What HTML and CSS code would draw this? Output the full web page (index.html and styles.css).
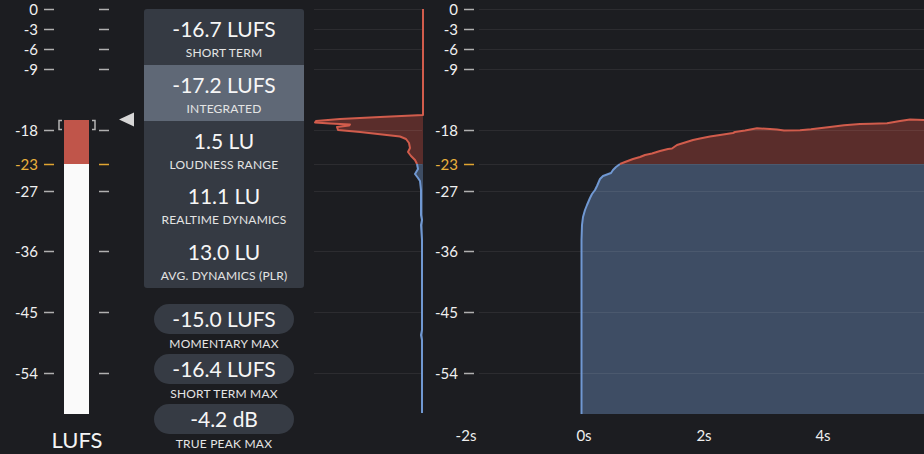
FILE: index.html
```html
<!DOCTYPE html>
<html lang="en">
<head>
    <meta charset="UTF-8">
    <title>Loudness Meter</title>
    <link rel="stylesheet" href="styles.css">
</head>
<body>
    <div class="app">
        <!-- LUFS bar meter -->
        <div class="meter">
            <svg class="meter-svg" width="140" height="454" viewBox="0 0 140 454">
                <g class="scale-text">
                    <text x="38" y="15">0</text>
                    <text x="38" y="35">-3</text>
                    <text x="38" y="55">-6</text>
                    <text x="38" y="75">-9</text>
                    <text x="38" y="136">-18</text>
                    <text x="38" y="170" class="target">-23</text>
                    <text x="38" y="197">-27</text>
                    <text x="38" y="257">-36</text>
                    <text x="38" y="318">-45</text>
                    <text x="38" y="379">-54</text>
                </g>
                <g class="ticks">
                    <line x1="44" x2="54" y1="9.5" y2="9.5"/><line x1="99" x2="109" y1="9.5" y2="9.5"/>
                    <line x1="44" x2="54" y1="29.5" y2="29.5"/><line x1="99" x2="109" y1="29.5" y2="29.5"/>
                    <line x1="44" x2="54" y1="49.5" y2="49.5"/><line x1="99" x2="109" y1="49.5" y2="49.5"/>
                    <line x1="44" x2="54" y1="69.5" y2="69.5"/><line x1="99" x2="109" y1="69.5" y2="69.5"/>
                    <line x1="44" x2="54" y1="130.5" y2="130.5"/><line x1="99" x2="109" y1="130.5" y2="130.5"/>
                    <line x1="44" x2="54" y1="164.5" y2="164.5" class="target"/><line x1="99" x2="109" y1="164.5" y2="164.5" class="target"/>
                    <line x1="44" x2="54" y1="191.5" y2="191.5"/><line x1="99" x2="109" y1="191.5" y2="191.5"/>
                    <line x1="44" x2="54" y1="251.5" y2="251.5"/><line x1="99" x2="109" y1="251.5" y2="251.5"/>
                    <line x1="44" x2="54" y1="312.5" y2="312.5"/><line x1="99" x2="109" y1="312.5" y2="312.5"/>
                    <line x1="44" x2="54" y1="373.5" y2="373.5"/><line x1="99" x2="109" y1="373.5" y2="373.5"/>
                </g>
                <rect class="bar-over" x="64" y="120" width="25" height="44"/>
                <rect class="bar-level" x="64" y="164" width="25" height="250"/>
                <polyline class="bracket" points="62,120.5 59,120.5 59,129.5 62,129.5"/>
                <polyline class="bracket" points="92,120.5 95,120.5 95,129.5 92,129.5"/>
                <polygon class="pointer" points="119,119.5 134,112.5 134,126.5"/>
            </svg>
            <div class="meter-unit">LUFS</div>
        </div>

        <!-- numeric readouts -->
        <div class="readouts">
            <div class="stats">
                <div class="stat">
                    <div class="stat-value">-16.7 LUFS</div>
                    <div class="stat-label">SHORT TERM</div>
                </div>
                <div class="stat active">
                    <div class="stat-value">-17.2 LUFS</div>
                    <div class="stat-label">INTEGRATED</div>
                </div>
                <div class="stat">
                    <div class="stat-value">1.5 LU</div>
                    <div class="stat-label">LOUDNESS RANGE</div>
                </div>
                <div class="stat">
                    <div class="stat-value">11.1 LU</div>
                    <div class="stat-label">REALTIME DYNAMICS</div>
                </div>
                <div class="stat">
                    <div class="stat-value">13.0 LU</div>
                    <div class="stat-label">AVG. DYNAMICS (PLR)</div>
                </div>
            </div>
            <div class="peaks">
                <div class="peak">
                    <div class="pill">-15.0 LUFS</div>
                    <div class="peak-label">MOMENTARY MAX</div>
                </div>
                <div class="peak">
                    <div class="pill">-16.4 LUFS</div>
                    <div class="peak-label">SHORT TERM MAX</div>
                </div>
                <div class="peak">
                    <div class="pill">-4.2 dB</div>
                    <div class="peak-label">TRUE PEAK MAX</div>
                </div>
            </div>
        </div>

        <!-- histogram + loudness history -->
        <svg class="graph" width="620" height="454" viewBox="304 0 620 454">
            <!-- histogram -->
            <polygon class="fill-over" points="423,115 380,117 340,119 316,121 315,122.5 330,123.5 350,124.5 349,125.5 337,127 338,130 360,132 400,136.5 406,139 409,143 410,148 408,152 411,156 415,160 417,164 423,164"/>
            <polygon class="fill-under" points="417,164 418,169 415,174 418,178 420,181 421,190 421,215 422,220 421,225 422,240 422,330 421,335 422,340 422,413 423,413 423,164"/>

            <!-- history -->
            <polygon class="fill-under" points="581.5,414 581.5,240 582,225 583,217 585,210 587,205 590,198 592,194 595,190 597,186 600,179 603,176 607,174.5 611,173 613,170 616,167 620,164 924,164 924,414"/>
            <polygon class="fill-over" points="620,164 625,162 633,159 640,157 645,155 652,153.5 660,151 668,149 672,148.5 677,145 685,142.5 693,140 700,138.5 710,136.5 720,135 733,133 735,132 745,130.5 757,128.3 770,129 777,129.5 784,130.5 800,130.3 811,129.3 830,127 844,125.3 860,124 871,123.7 887,123.3 900,121 910,119.5 924,120 924,164"/>

            <g class="grid">
                <line x1="314" x2="422" y1="9.5" y2="9.5"/><line x1="479" x2="924" y1="9.5" y2="9.5"/>
                <line x1="314" x2="422" y1="29.5" y2="29.5"/><line x1="479" x2="924" y1="29.5" y2="29.5"/>
                <line x1="314" x2="422" y1="49.5" y2="49.5"/><line x1="479" x2="924" y1="49.5" y2="49.5"/>
                <line x1="314" x2="422" y1="69.5" y2="69.5"/><line x1="479" x2="924" y1="69.5" y2="69.5"/>
                <line x1="314" x2="422" y1="130.5" y2="130.5"/><line x1="479" x2="924" y1="130.5" y2="130.5"/>
                <line x1="314" x2="422" y1="164.5" y2="164.5"/><line x1="479" x2="924" y1="164.5" y2="164.5"/>
                <line x1="314" x2="422" y1="191.5" y2="191.5"/><line x1="479" x2="924" y1="191.5" y2="191.5"/>
                <line x1="314" x2="422" y1="251.5" y2="251.5"/><line x1="479" x2="924" y1="251.5" y2="251.5"/>
                <line x1="314" x2="422" y1="312.5" y2="312.5"/><line x1="479" x2="924" y1="312.5" y2="312.5"/>
                <line x1="314" x2="422" y1="373.5" y2="373.5"/><line x1="479" x2="924" y1="373.5" y2="373.5"/>
            </g>

            <polyline class="line-over" points="423,9 423,115 380,117 340,119 316,121 315,122.5 330,123.5 350,124.5 349,125.5 337,127 338,130 360,132 400,136.5 406,139 409,143 410,148 408,152 411,156 415,160 417,164"/>
            <polyline class="line-under" points="417,164 418,169 415,174 418,178 420,181 421,190 421,215 422,220 421,225 422,240 422,330 421,335 422,340 422,413"/>
            <polyline class="line-under" points="581.5,414 581.5,240 582,225 583,217 585,210 587,205 590,198 592,194 595,190 597,186 600,179 603,176 607,174.5 611,173 613,170 616,167 620,164"/>
            <polyline class="line-over" points="620,164 625,162 633,159 640,157 645,155 652,153.5 660,151 668,149 672,148.5 677,145 685,142.5 693,140 700,138.5 710,136.5 720,135 733,133 735,132 745,130.5 757,128.3 770,129 777,129.5 784,130.5 800,130.3 811,129.3 830,127 844,125.3 860,124 871,123.7 887,123.3 900,121 910,119.5 924,120"/>

            <g class="scale-text">
                <text x="458" y="15">0</text>
                <text x="458" y="35">-3</text>
                <text x="458" y="55">-6</text>
                <text x="458" y="75">-9</text>
                <text x="458" y="136">-18</text>
                <text x="458" y="170" class="target">-23</text>
                <text x="458" y="197">-27</text>
                <text x="458" y="257">-36</text>
                <text x="458" y="318">-45</text>
                <text x="458" y="379">-54</text>
            </g>
            <g class="ticks">
                <line x1="464" x2="474" y1="9.5" y2="9.5"/>
                <line x1="464" x2="474" y1="29.5" y2="29.5"/>
                <line x1="464" x2="474" y1="49.5" y2="49.5"/>
                <line x1="464" x2="474" y1="69.5" y2="69.5"/>
                <line x1="464" x2="474" y1="130.5" y2="130.5"/>
                <line x1="464" x2="474" y1="164.5" y2="164.5" class="target"/>
                <line x1="464" x2="474" y1="191.5" y2="191.5"/>
                <line x1="464" x2="474" y1="251.5" y2="251.5"/>
                <line x1="464" x2="474" y1="312.5" y2="312.5"/>
                <line x1="464" x2="474" y1="373.5" y2="373.5"/>
            </g>
            <g class="time-text">
                <text x="466" y="441">-2s</text>
                <text x="584" y="441">0s</text>
                <text x="704" y="441">2s</text>
                <text x="823" y="441">4s</text>
            </g>
        </svg>
    </div>
</body>
</html>
```

FILE: styles.css
```css
body {
    margin: 0;
    background: #1c1d21;
    font-family: 'Lato', 'Noto Sans', sans-serif;
    color: #f2f2f2;
    overflow: hidden;
}
.app {
    display: flex;
    height: 454px;
}
.meter {
    position: relative;
    width: 140px;
    flex: none;
}
.meter-svg {
    display: block;
}
.meter-unit {
    position: absolute;
    left: 37px;
    width: 80px;
    top: 426px;
    text-align: center;
    font-size: 22px;
    color: #f4f4f4;
}
.scale-text text {
    font-size: 15px;
    fill: #f0f0f0;
    text-anchor: end;
}
.scale-text text.target {
    fill: #e8b03c;
}
.ticks line {
    stroke: #b0b0b0;
    stroke-width: 1.5;
}
.ticks line.target {
    stroke: #e0a531;
}
.bar-over {
    fill: #c0554a;
}
.bar-level {
    fill: #fafafa;
}
.bracket {
    fill: none;
    stroke: #b4b4b4;
    stroke-width: 1.5;
}
.pointer {
    fill: #d6d6d6;
}

/* readouts */
.readouts {
    width: 160px;
    flex: none;
    margin-left: 4px;
    padding-top: 9px;
}
.stats {
    background: #353a43;
    border-radius: 3px;
    overflow: hidden;
}
.stat {
    height: 55.8px;
    box-sizing: border-box;
    padding-top: 8px;
    text-align: center;
}
.stat.active {
    background: #5f6876;
}
.stat-value {
    font-size: 21px;
    line-height: 24px;
    color: #f6f6f6;
}
.stat-label {
    margin-top: 5px;
    font-size: 12px;
    line-height: 14px;
    letter-spacing: 0.2px;
    color: #e4e4e4;
}
.peaks {
    margin-top: 16px;
    padding: 0 10px;
}
.pill {
    height: 30px;
    line-height: 30px;
    border-radius: 15px;
    background: #363b44;
    text-align: center;
    font-size: 21px;
    color: #f6f6f6;
}
.peak-label {
    height: 20px;
    line-height: 20px;
    text-align: center;
    font-size: 12px;
    letter-spacing: 0.2px;
    color: #e4e4e4;
}

/* graphs */
.graph {
    display: block;
    flex: none;
}
.grid line {
    stroke: rgba(255, 255, 255, 0.07);
    stroke-width: 1;
}
.fill-over {
    fill: #5a2d2b;
}
.fill-under {
    fill: #3e4d64;
}
.line-over,
.line-under {
    fill: none;
    stroke-width: 2;
    stroke-linejoin: round;
}
.line-over {
    stroke: #d15c4c;
}
.line-under {
    stroke: #7098d2;
}
.time-text text {
    font-size: 15px;
    fill: #eeeeee;
    text-anchor: middle;
}
```
